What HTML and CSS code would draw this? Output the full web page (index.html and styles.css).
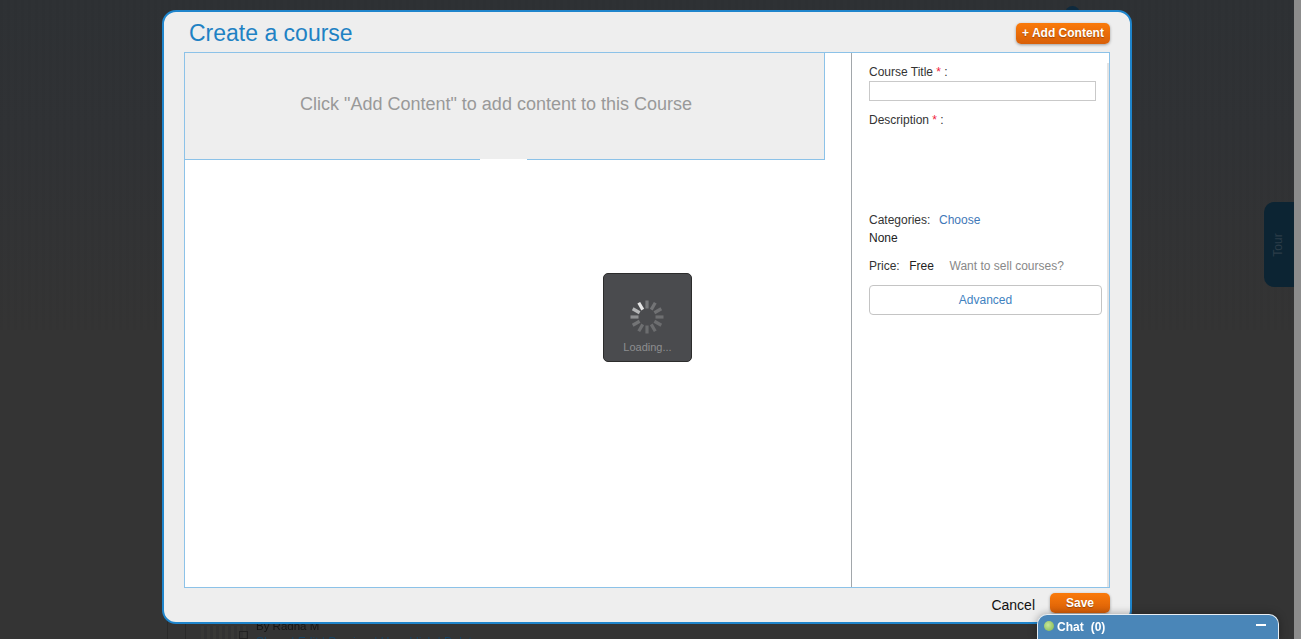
FILE: index.html
```html
<!DOCTYPE html>
<html lang="en">
<head>
<meta charset="utf-8">
<title>Create a course</title>
<link rel="stylesheet" href="styles.css">
</head>
<body>
<div class="backdrop">
  <div class="page-top"></div>
  <div class="page-dot"></div>
  <div class="tour"><span class="tour-label">Tour</span></div>
  <div class="page-course">
    <div class="page-thumb"><span class="page-thumb-box"></span></div>
    <div class="page-info">
      <div class="page-by">By Radha M</div>
      <div class="page-links">Share | Edit | Preview | Unpublish | Delete</div>
    </div>
  </div>
  <div class="scrollbar"></div>
</div>

<div class="modal">
  <header class="modal-head">
    <h1 class="modal-title">Create a course</h1>
    <button class="btn btn-add">+ Add Content</button>
  </header>
  <div class="modal-body">
    <section class="content-col">
      <div class="empty-note">Click "Add Content" to add content to this Course</div>
      <div class="note-gap"></div>
    </section>
    <aside class="side-col">
      <div class="field-label">Course Title <span class="req">*</span> :</div>
      <input class="text-input" type="text">
      <div class="field-label desc-label">Description <span class="req">*</span> :</div>
      <div class="row cat-row"><span>Categories:</span><a class="link-blue">Choose</a></div>
      <div class="none-row">None</div>
      <div class="row price-row"><span>Price:</span><span>Free</span><a class="link-gray">Want to sell courses?</a></div>
      <button class="advanced">Advanced</button>
    </aside>
  </div>
  <footer class="modal-foot">
    <a class="cancel">Cancel</a>
    <button class="btn btn-save">Save</button>
  </footer>
</div>

<div class="loader">
  <svg class="spinner" width="36" height="36" viewBox="-18 -18 36 36">
    <g stroke-width="3.2" fill="none">
      <line y1="-8.5" y2="-16.5" stroke="#e6e6e6" transform="rotate(-30)"/>
      <line y1="-8.5" y2="-16.5" stroke="#77787a"/>
      <line y1="-8.5" y2="-16.5" stroke="#737476" transform="rotate(30)"/>
      <line y1="-8.5" y2="-16.5" stroke="#707173" transform="rotate(60)"/>
      <line y1="-8.5" y2="-16.5" stroke="#6e6f71" transform="rotate(90)"/>
      <line y1="-8.5" y2="-16.5" stroke="#6c6d6f" transform="rotate(120)"/>
      <line y1="-8.5" y2="-16.5" stroke="#6c6d6f" transform="rotate(150)"/>
      <line y1="-8.5" y2="-16.5" stroke="#6c6d6f" transform="rotate(180)"/>
      <line y1="-8.5" y2="-16.5" stroke="#6e6f71" transform="rotate(210)"/>
      <line y1="-8.5" y2="-16.5" stroke="#737476" transform="rotate(240)"/>
      <line y1="-8.5" y2="-16.5" stroke="#8e8f91" transform="rotate(270)"/>
      <line y1="-8.5" y2="-16.5" stroke="#b4b5b6" transform="rotate(300)"/>
    </g>
  </svg>
  <div class="loader-text">Loading...</div>
</div>

<div class="chat">
  <span class="chat-dot"></span>
  <span class="chat-name">Chat</span>
  <span class="chat-count">(0)</span>
  <span class="chat-min"></span>
</div>
</body>
</html>
```

FILE: styles.css
```css
* { box-sizing: border-box; }
html, body { margin: 0; height: 100%; overflow: hidden; }
body {
  background: #343434;
  font-family: "Liberation Sans", Arial, sans-serif;
  font-size: 12px;
  color: #222;
}
.backdrop { position: fixed; inset: 0; overflow: hidden; }
.page-top {
  height: 330px;
  background:
    repeating-linear-gradient(90deg, rgba(0,0,0,.025) 0 3px, rgba(0,0,0,0) 3px 7px),
    linear-gradient(#2e3134 0, #303235 130px, #343434 100%);
}
.page-dot {
  position: absolute; left: 1065px; top: 6px;
  width: 15px; height: 15px; border-radius: 50%;
  background: #0e2a3e;
}
.tour {
  position: absolute; left: 1264px; top: 202px;
  width: 30px; height: 85px;
  background: #0c2433;
  border-radius: 10px 0 0 10px;
  display: flex; align-items: center; justify-content: center;
  padding-right: 2px;
}
.tour-label {
  transform: rotate(-90deg);
  font-size: 12px;
  color: #2b3c48;
}
.scrollbar {
  position: absolute; right: 0; top: 0;
  width: 7px; height: 100%;
  background: #8c8c8c;
}
.page-course {
  position: absolute; left: 167px; top: 612px;
  width: 800px; height: 27px;
  border-left: 1px solid #2a2a2a;
  padding-left: 88px;
  display: flex;
}
.page-course::before {
  content: "";
  position: absolute; left: 17px; top: 0; bottom: 0;
  border-left: 1px solid #2a2a2a;
}
.page-thumb {
  position: absolute; left: 33px; top: 14px;
  width: 47px; height: 13px;
  background: repeating-linear-gradient(90deg, #383836 0 3px, #323232 3px 6px);
}
.page-thumb-box {
  position: absolute; right: 0; top: 5px;
  width: 9px; height: 8px;
  border: 1px solid #222;
}
.page-by { font-size: 11.5px; color: #151515; line-height: 12px; margin-top: 8px; }
.page-links { font-size: 12px; color: #174464; line-height: 14px; margin-top: 3px; white-space: nowrap; }

.modal {
  position: absolute; left: 162px; top: 10px;
  width: 970px; height: 614px;
  background: #eeeeee;
  border: 2px solid #1f85cc;
  border-radius: 14px;
  padding: 0 20px;
  display: flex; flex-direction: column;
}
.modal-head {
  height: 40px; flex: none;
  display: flex; justify-content: space-between; align-items: flex-start;
}
.modal-title {
  margin: 7px 0 0 5px;
  font-size: 23px; line-height: 28px; font-weight: 400;
  color: #1f82c4;
}
.btn {
  border: 0; border-radius: 5px;
  background: linear-gradient(#fa7a0a, #d85f08);
  color: #fff;
  font-family: inherit; font-size: 12px; font-weight: 700;
  text-shadow: 0 1px 1px rgba(0,0,0,.3);
  box-shadow: 0 1px 3px rgba(0,0,0,.35);
  padding: 0;
}
.btn-add { width: 94px; height: 21px; margin-top: 11px; line-height: 19px; padding-bottom: 1px; }
.modal-body {
  height: 536px; flex: none;
  background: #fff;
  border: 1px solid #8cc2e8;
  display: flex;
}
.content-col { width: 667px; flex: none; border-right: 1px solid #a2a7ab; position: relative; }
.empty-note {
  width: 640px; height: 107px;
  background: #eeeeee;
  border-right: 1px solid #8cc2e8;
  border-bottom: 1px solid #8cc2e8;
  display: flex; align-items: center; justify-content: center;
  font-size: 18px; color: #999;
  padding: 0 17px 4px 0;
}
.note-gap {
  position: absolute; left: 295px; top: 106px;
  width: 47px; height: 1px; background: #fff;
}
.side-col {
  flex: 1; min-width: 0;
  padding: 12px 0 0 17px;
  color: #333;
  position: relative;
}
.side-col::after {
  content: "";
  position: absolute; right: 0; top: 10px; bottom: 0;
  width: 2px; background: #e4e4e4;
}
.field-label { line-height: 14px; }
.req { color: #f0223c; }
.text-input {
  display: block;
  width: 227px; height: 20px;
  margin-top: 2px;
  border: 1px solid #c9c9c9;
  background: #fff;
  padding: 0;
}
.desc-label { margin-top: 12px; }
.row { display: flex; line-height: 14px; }
.cat-row { margin-top: 86px; gap: 8.6px; }
.none-row { margin-top: 4px; line-height: 14px; color: #222; }
.price-row { margin-top: 14px; gap: 9.6px; }
.price-row span:nth-child(2) { color: #222; margin-right: 6px; }
.link-blue { color: #3f78b8; }
.link-gray { color: #888; }
.advanced {
  position: relative; z-index: 1;
  display: block;
  width: 233px; height: 30px;
  margin-top: 12px;
  background: #fff;
  border: 1px solid #c4c4c4;
  border-radius: 4px;
  font-family: inherit; font-size: 12px;
  color: #3f82bf;
  padding: 0;
}
.modal-foot {
  flex: 1;
  display: flex; justify-content: flex-end; align-items: flex-start; gap: 15px;
}
.cancel { font-size: 14px; line-height: 16px; margin-top: 9px; color: #111; }
.btn-save { width: 60px; height: 20px; margin-top: 5px; line-height: 19px; padding-bottom: 0; }

.loader {
  position: absolute; left: 603px; top: 273px;
  width: 89px; height: 89px;
  background: #4a4b4e;
  border: 1px solid #2c2c2c;
  border-radius: 5px;
  display: flex; flex-direction: column; align-items: center;
}
.spinner { margin-top: 25px; margin-right: 1px; flex: none; }
.loader-text { margin-top: 6px; font-size: 11px; line-height: 13px; color: #8d8e90; }

.chat {
  position: absolute; left: 1037px; top: 614px;
  width: 242px; height: 25px;
  background: #4a86b8;
  border: 1px solid #e8eef3; border-bottom: 0;
  border-radius: 10px 10px 0 0;
  box-shadow: 0 0 8px rgba(0,0,0,.35);
  display: flex; align-items: center;
  padding: 0 0 0 6px;
  color: #fff; font-size: 12px; font-weight: 700;
}
.chat-dot {
  width: 10px; height: 10px; border-radius: 50%;
  background: radial-gradient(circle at 40% 40%, #c6e79a, #7eb34a);
  margin-right: 3px; margin-top: -2px;
}
.chat-count { margin-left: 7px; }
.chat-min {
  width: 10px; height: 2px; background: #fff;
  margin-left: auto; margin-right: 12px; margin-top: -5px;
}
```
